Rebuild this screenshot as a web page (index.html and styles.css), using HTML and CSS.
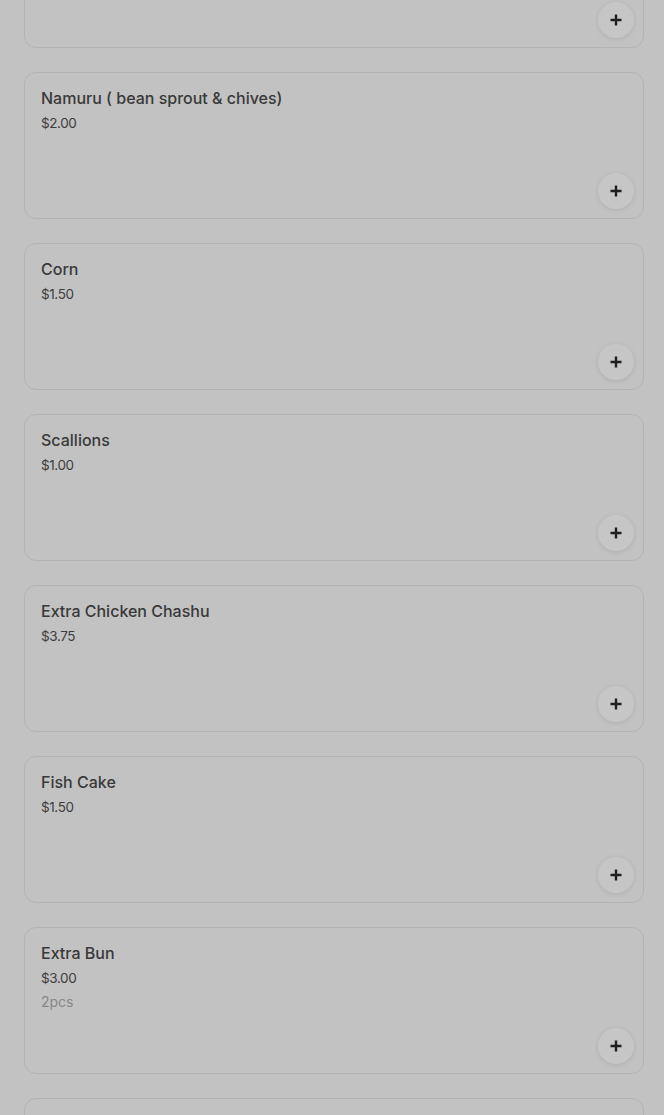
FILE: index.html
```html
<!DOCTYPE html>
<html lang="en">
<head>
  <meta charset="UTF-8" />
  <meta name="viewport" content="width=device-width, initial-scale=1.0" />
  <title>Menu - Add-ons</title>
  <link rel="stylesheet" href="styles.css">
</head>
<body>

  <div class="menu-list">
    <!-- item above the fold, only its bottom shows -->
    <div class="item-card">
      <div class="item-info"></div>
      <button class="add-btn" aria-label="Add">
        <svg width="12" height="12" viewBox="0 0 12 12"><path d="M6 0.5v11M0.5 6h11" stroke="currentColor" stroke-width="2.4" /></svg>
      </button>
    </div>

    <div class="item-card">
      <div class="item-info">
        <div class="item-name">Namuru ( bean sprout &amp; chives)</div>
        <div class="item-price">$2.00</div>
      </div>
      <button class="add-btn" aria-label="Add">
        <svg width="12" height="12" viewBox="0 0 12 12"><path d="M6 0.5v11M0.5 6h11" stroke="currentColor" stroke-width="2.4" /></svg>
      </button>
    </div>

    <div class="item-card">
      <div class="item-info">
        <div class="item-name">Corn</div>
        <div class="item-price">$1.50</div>
      </div>
      <button class="add-btn" aria-label="Add">
        <svg width="12" height="12" viewBox="0 0 12 12"><path d="M6 0.5v11M0.5 6h11" stroke="currentColor" stroke-width="2.4" /></svg>
      </button>
    </div>

    <div class="item-card">
      <div class="item-info">
        <div class="item-name">Scallions</div>
        <div class="item-price">$1.00</div>
      </div>
      <button class="add-btn" aria-label="Add">
        <svg width="12" height="12" viewBox="0 0 12 12"><path d="M6 0.5v11M0.5 6h11" stroke="currentColor" stroke-width="2.4" /></svg>
      </button>
    </div>

    <div class="item-card">
      <div class="item-info">
        <div class="item-name">Extra Chicken Chashu</div>
        <div class="item-price">$3.75</div>
      </div>
      <button class="add-btn" aria-label="Add">
        <svg width="12" height="12" viewBox="0 0 12 12"><path d="M6 0.5v11M0.5 6h11" stroke="currentColor" stroke-width="2.4" /></svg>
      </button>
    </div>

    <div class="item-card">
      <div class="item-info">
        <div class="item-name">Fish Cake</div>
        <div class="item-price">$1.50</div>
      </div>
      <button class="add-btn" aria-label="Add">
        <svg width="12" height="12" viewBox="0 0 12 12"><path d="M6 0.5v11M0.5 6h11" stroke="currentColor" stroke-width="2.4" /></svg>
      </button>
    </div>

    <div class="item-card">
      <div class="item-info">
        <div class="item-name">Extra Bun</div>
        <div class="item-price">$3.00</div>
        <div class="item-desc">2pcs</div>
      </div>
      <button class="add-btn" aria-label="Add">
        <svg width="12" height="12" viewBox="0 0 12 12"><path d="M6 0.5v11M0.5 6h11" stroke="currentColor" stroke-width="2.4" /></svg>
      </button>
    </div>

    <!-- next item starts at the bottom edge -->
    <div class="item-card">
      <div class="item-info"></div>
    </div>
  </div>

</body>
</html>
```

FILE: styles.css
```css
html, body {
  margin: 0;
  padding: 0;
  background-color: #c2c2c2;
  height: 100%;
  overflow: hidden;
}
body {
  font-family: 'Inter', 'Roboto', sans-serif;
  color: #333;
}
.menu-list {
  display: flex;
  flex-direction: column;
  gap: 24px;
  padding: 0 20px 0 24px;
  /* page is scrolled: first card is mostly out of view */
  margin-top: -99px;
}
.item-card {
  box-sizing: border-box;
  height: 147px;
  border: 1px solid #b3b3b3;
  border-radius: 12px;
  padding: 15px 9px 9px 16px;
  display: flex;
  flex-direction: column;
  justify-content: space-between;
}
.item-name {
  font-size: 16px;
  font-weight: 500;
  line-height: 20px;
  color: #393939;
}
.item-price {
  font-size: 13.5px;
  line-height: 20px;
  margin-top: 5px;
  color: #3d3d3d;
  letter-spacing: -0.4px;
}
.item-desc {
  font-size: 14px;
  line-height: 20px;
  margin-top: 4px;
  color: #878787;
}
.add-btn {
  align-self: flex-end;
  width: 36px;
  height: 36px;
  border-radius: 50%;
  border: none;
  background-color: #c6c6c6;
  box-shadow: 0 1px 5px rgba(0, 0, 0, 0.1);
  color: #1f1f1f;
  padding: 0;
  display: flex;
  align-items: center;
  justify-content: center;
  cursor: pointer;
}
```
